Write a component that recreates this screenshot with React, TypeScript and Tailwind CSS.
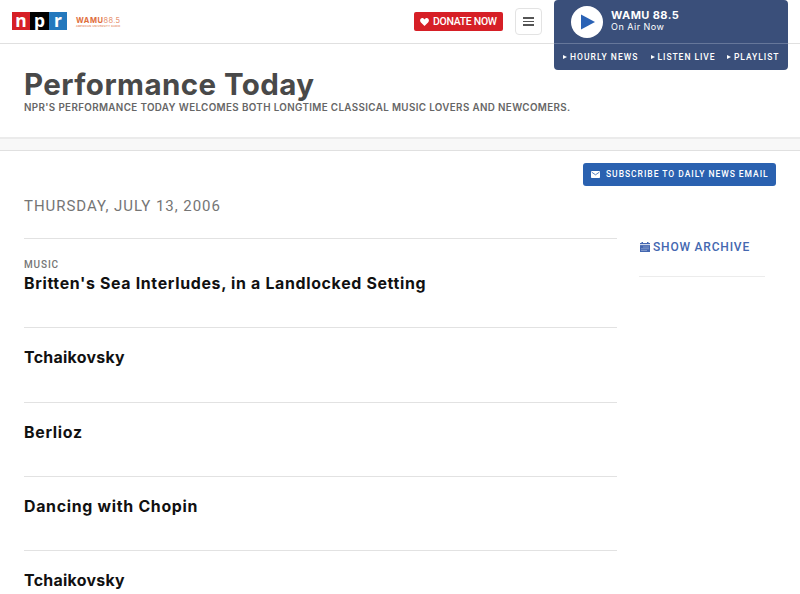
import React from 'react'

interface Story {
  slug?: string
  title: string
  className: string
}

const stories: Story[] = [
  { slug: 'Music', title: "Britten's Sea Interludes, in a Landlocked Setting", className: 'tracking-[0.67px]' },
  { title: 'Tchaikovsky', className: 'tracking-[0.28px]' },
  { title: 'Berlioz', className: 'tracking-[0.7px]' },
  { title: 'Dancing with Chopin', className: 'tracking-[0.7px]' },
  { title: 'Tchaikovsky', className: 'tracking-[0.28px]' },
]

const playerLinks = [
  { label: 'Hourly News', className: 'w-[87.5px] tracking-[1.03px]' },
  { label: 'Listen Live', className: 'w-[76.5px] tracking-[0.95px]' },
  { label: 'Playlist', className: 'w-[60px] tracking-[0.95px]' },
]

function NprLogo() {
  return (
    <div className="mb-px flex h-[18px] w-[55px] font-['Noto_Sans'] text-[17.5px] font-bold leading-[17px] text-white">
      <span className="w-[18px] bg-[#d61f26] text-center">n</span>
      <span className="w-[19px] bg-black text-center">p</span>
      <span className="w-[18px] bg-[#2378bd] text-center">r</span>
    </div>
  )
}

function StationLogo() {
  return (
    <div className="ml-[9px] w-[45px] whitespace-nowrap pt-[2px] text-[#e06d3b]">
      <div className="flex items-baseline text-[7.5px] leading-[8px]">
        <span className="font-bold tracking-[0.55px]">WAMU</span>
        <span className="font-light tracking-[0.35px]">88.5</span>
      </div>
      <div className="text-[2.5px] font-medium leading-[4px] tracking-[0.28px]">AMERICAN UNIVERSITY RADIO</div>
    </div>
  )
}

function CalendarIcon() {
  return (
    <svg viewBox="0 0 10 10" className="h-[10px] w-[10px]" fill="#4467b0">
      <path d="M0 1h1.5V0H3v1h4V0h1.5v1H10v1.3H0z" />
      <path d="M0 3.1h10V10H0z" />
      <path d="M3.5 4.5h1v1h-1zM5.5 4.5h1v1h-1zM7.5 4.5h1v1h-1zM1.5 6.3h1v1h-1zM3.5 6.3h1v1h-1zM5.5 6.3h1v1h-1zM7.5 6.3h1v1h-1zM1.5 8.1h1v1h-1zM3.5 8.1h1v1h-1zM5.5 8.1h1v1h-1z" fill="#b9c6e2" />
    </svg>
  )
}

function Player() {
  return (
    <section className="absolute left-[554px] top-0 h-[70px] w-[234px] rounded bg-[#3a4f7a] text-white">
      <div className="flex h-[43px] items-center pl-[17px]">
        <button className="flex h-8 w-8 shrink-0 items-center justify-center rounded-full bg-white">
          <svg viewBox="0 0 14 16" className="ml-0.5 h-4 w-3.5" fill="#2a62b5">
            <path d="M0 0.5 14 8 0 15.5z" />
          </svg>
        </button>
        <div className="ml-[8px] pb-[2px]">
          <p className="text-[11px] font-bold leading-[12px] tracking-[0.4px]">WAMU 88.5</p>
          <p className="text-[9px] leading-[11px] tracking-[0.5px]">On Air Now</p>
        </div>
      </div>
      <nav className="flex h-[27px] items-center border-t border-[#66779a] pl-[9px] font-[Roboto] text-[8.5px] font-medium uppercase">
        {playerLinks.map(link => (
          <a key={link.label} className={`flex shrink-0 items-center whitespace-nowrap ${link.className}`}>
            <svg viewBox="0 0 4 4" className="mr-[3px] h-1 w-1 shrink-0" fill="currentColor">
              <path d="M0 0 4 2 0 4z" />
            </svg>
            {link.label}
          </a>
        ))}
      </nav>
    </section>
  )
}

export default function App() {
  return (
    <div className="relative h-[594px] w-[800px] overflow-hidden bg-white font-[Inter,sans-serif] text-[#111]">
      <header className="flex h-[44px] items-center border-b border-[#e0e0e0] pl-3">
        <NprLogo />
        <StationLogo />
        <a className="ml-[293px] flex h-[19px] w-[89px] items-center rounded-[2px] bg-[#d61f26] pl-[6px] font-[Roboto] text-[10.5px] font-medium text-white">
          <svg viewBox="0 0 10 9" className="mr-1 h-2 w-[9px] shrink-0" fill="currentColor">
            <path d="M5 9 1 5C-1.3 2.5.9-.9 3.5.3 4.2.6 4.7 1.1 5 1.6 5.3 1.1 5.8.6 6.5.3 9.1-.9 11.3 2.5 9 5z" />
          </svg>
          <span className="whitespace-nowrap tracking-[-0.3px]">DONATE NOW</span>
        </a>
        <button className="ml-3 flex h-[27px] w-[27px] flex-col items-center justify-center gap-[2px] rounded border border-[#e3e3e3]">
          <span className="h-[1.5px] w-[11px] bg-[#555]" />
          <span className="h-[1.5px] w-[11px] bg-[#555]" />
          <span className="h-[1.5px] w-[11px] bg-[#555]" />
        </button>
      </header>
      <Player />

      <div className="h-[95px] border-b-2 border-[#ebebeb] pl-6 pt-[22px]">
        <h1 className="whitespace-nowrap text-[29.5px] font-bold leading-[36px] tracking-[0.43px] text-[#494949]">Performance Today</h1>
        <p className="whitespace-nowrap text-[9.8px] font-semibold leading-[12px] tracking-[0.37px] text-[#666]">
          NPR'S PERFORMANCE TODAY WELCOMES BOTH LONGTIME CLASSICAL MUSIC LOVERS AND NEWCOMERS.
        </p>
      </div>
      <div className="h-[12px] border-b border-[#e0e0e0] bg-[#f8f8f8]" />

      <div className="flex justify-end pr-6 pt-[12px]">
        <a className="flex h-[23px] w-[193px] items-center rounded-[3px] bg-[#2a61b0] pl-[8px] font-[Roboto] text-[8.5px] font-medium text-white">
          <svg viewBox="0 0 9 7" className="mr-[6px] h-[7px] w-[9px] shrink-0">
            <rect width="9" height="7" rx="0.8" fill="white" />
            <path d="M0.7 1.2 4.5 3.8 8.3 1.2" fill="none" stroke="#2a61b0" strokeWidth="0.8" />
          </svg>
          <span className="whitespace-nowrap tracking-[0.97px]">SUBSCRIBE TO DAILY NEWS EMAIL</span>
        </a>
      </div>

      <div className="flex pl-6">
        <main className="w-[593px] shrink-0">
          <h2 className="h-[52px] whitespace-nowrap pt-[10px] font-[Roboto] text-[15px] leading-[20px] tracking-[0.96px] text-[#757575]">
            THURSDAY, JULY 13, 2006
          </h2>
          {stories.map((story, i) => (
            <article key={i} className={`border-t border-[#e2e2e2] ${story.slug ? 'h-[89.4px] pt-5' : 'h-[74.25px] pt-5'}`}>
              {story.slug && (
                <p className="h-[15px] font-[Roboto] text-[10px] font-medium leading-[12px] tracking-[0.85px] text-[#767676] uppercase">{story.slug}</p>
              )}
              <h3 className={`whitespace-nowrap text-[15.9px] font-bold leading-[20px] ${story.className}`}>{story.title}</h3>
            </article>
          ))}
        </main>
        <aside className="ml-[22px] h-[91px] w-[126px] border-b border-[#ececec] pt-[53px]">
          <a className="flex items-center pl-px font-[Roboto] text-[12px] leading-4 tracking-[0.8px] text-[#4467b0]">
            <CalendarIcon />
            <span className="ml-[3px] whitespace-nowrap font-medium">SHOW ARCHIVE</span>
          </a>
        </aside>
      </div>
    </div>
  )
}
